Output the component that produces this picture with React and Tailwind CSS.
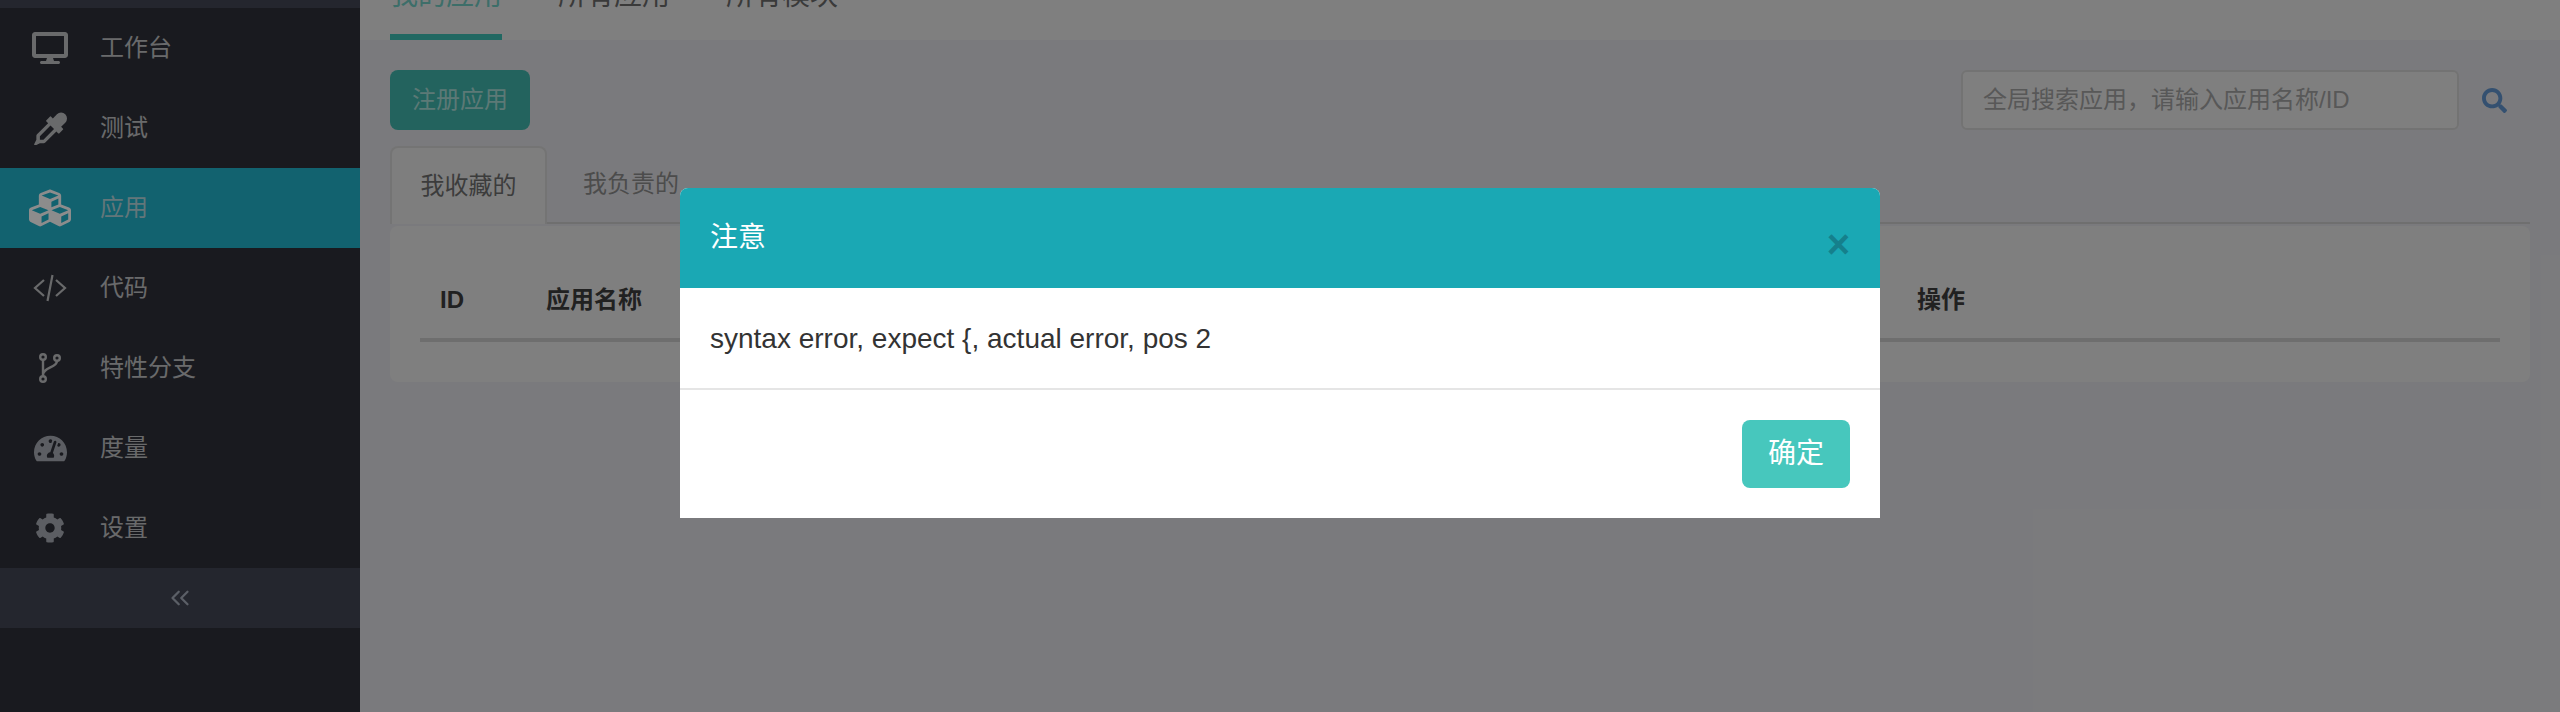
import React from "react";
import { FaDesktop, FaCubes, FaTachometerAlt, FaCog, FaSearch } from "react-icons/fa";
import { ChevronsLeft } from "lucide-react";

const DropperIcon = () => (
  <svg width="33" height="33" viewBox="0 0 1792 1792" fill="currentColor">
    <path d="M1698 126q94 94 94 226.500t-94 225.500l-225 223 104 104q10 10 10 23t-10 23l-210 210q-10 10-23 10t-23-10l-105-105-603 603q-37 37-90 37h-203l-256 128-64-64 128-256v-203q0-53 37-90l603-603-105-105q-10-10-10-23t10-23l210-210q10-10 23-10t23 10l104 104 223-225q93-94 225.500-94t226.500 94zm-1186 1378l576-576-192-192-576 576v192h192z" />
  </svg>
);

const CodeIcon = () => (
  <svg width="34" height="28" viewBox="0 0 34 28" fill="none" stroke="currentColor" strokeWidth="2.2">
    <path d="M11 6 2 14l9 8M23 6l9 8-9 8M19.500 1l-5 26" />
  </svg>
);

const BranchIcon = () => (
  <svg width="22" height="30" viewBox="0 0 22 30" fill="none" stroke="currentColor" strokeWidth="2.4">
    <circle cx="4" cy="4" r="2.800" />
    <circle cx="18" cy="5" r="2.800" />
    <circle cx="4" cy="26" r="2.800" />
    <path d="M4 7v16M18 8c0 7-14 6-14 14" />
  </svg>
);

const menu = [
  { label: "工作台", icon: <FaDesktop size={36} /> },
  { label: "测试", icon: <DropperIcon /> },
  { label: "应用", icon: <FaCubes size={42} className="text-white" />, active: true },
  { label: "代码", icon: <CodeIcon /> },
  { label: "特性分支", icon: <BranchIcon /> },
  { label: "度量", icon: <FaTachometerAlt size={33} className="text-[#a8acb4]" /> },
  { label: "设置", icon: <FaCog size={30} className="text-[#a8acb4]" /> },
];

const Sidebar = () => (
  <aside className="w-[360px] shrink-0 bg-[#2f3139] pt-2 relative">
    <div className="absolute top-0 left-0 w-full h-2 bg-[#434554]" />
    {menu.map((item) => (
      <div
        key={item.label}
        className={
          item.active
            ? "h-20 flex items-center bg-[#21b2ca] text-[#b5d8de]"
            : "h-20 flex items-center text-[#c0c1c4]"
        }
      >
        <span className="w-[100px] flex justify-center shrink-0">{item.icon}</span>
        <span className="text-2xl">{item.label}</span>
      </div>
    ))}
    <div className="h-[60px] bg-[#434554] flex items-center justify-center text-[#a7aebc]">
      <ChevronsLeft size={30} strokeWidth={1.8} />
    </div>
  </aside>
);

const Main = () => (
  <main className="flex-1 min-w-0 bg-[#dfdfe3]">
    <nav className="h-10 overflow-hidden flex items-end gap-14 px-[30px] bg-[#e8e8e8] text-[28px] text-[#6a6a6a]">
      <span className="border-b-[6px] border-[#3cbdb2] pb-[18px] leading-10 text-[#6fc8c0]">我的应用</span>
      <span className="pb-6 leading-10">所有应用</span>
      <span className="pb-6 leading-10">所有模块</span>
    </nav>

    <div className="px-[30px] pt-[30px]">
      <div className="flex justify-between items-center h-[60px]">
        <button className="w-[140px] h-[60px] rounded-lg bg-[#40b5ac] text-2xl text-[#a8dcd7]">注册应用</button>
        <div className="flex items-center">
          <div className="w-[498px] h-[60px] rounded-md border-2 border-[#d2d2d2] bg-[#e8e8e8] flex items-center pl-5 text-2xl text-[#a0a0a0]">
            全局搜索应用，请输入应用名称/ID
          </div>
          <span className="w-[71px] flex justify-center text-[#5f93cc]">
            <FaSearch size={25} />
          </span>
        </div>
      </div>

      <div className="mt-4 h-[78px] flex border-b-2 border-[#cacaca]">
        <div className="w-[157px] h-[78px] bg-[#e6e6e6] rounded-t-lg border-2 border-b-0 border-[#d4d4d4] flex items-center justify-center text-2xl text-[#6e6e6e]">
          我收藏的
        </div>
        <div className="ml-9 h-[76px] flex items-center text-2xl text-[#8a8a8a]">我负责的</div>
      </div>

      <div className="mt-0.5 h-[156px] bg-[#e8e8e8] rounded-lg px-[30px]">
        <div className="h-[116px] border-b-4 border-[#c8c8c8] flex items-center pt-[36px] text-2xl font-bold text-[#3c3c3c] relative">
          <span className="pl-5 w-[126px]">ID</span>
          <span>应用名称</span>
          <span className="absolute left-[1497px]">操作</span>
        </div>
      </div>
    </div>
  </main>
);

const App = () => (
  <div
    className="relative h-screen flex overflow-hidden"
    style={{ fontFamily: '"Liberation Sans", "Noto Sans CJK SC", sans-serif' }}
  >
    <Sidebar />
    <Main />

    <div className="absolute inset-0 bg-black/45 flex justify-center pt-[188px]">
      <div className="w-[1200px] h-[330px] bg-white rounded-t-lg">
        <div className="h-[100px] bg-[#1aa8b4] rounded-t-lg flex items-center justify-between px-[30px] text-[28px] text-white">
          <span>注意</span>
          <span className="text-[40px] font-bold leading-none text-[#15808c] mt-3">×</span>
        </div>
        <div className="h-[102px] border-b-2 border-[#e5e5e5] flex items-center px-[30px] pt-0.5 text-[28px] text-[#333]">
          syntax error, expect {"{"}, actual error, pos 2
        </div>
        <div className="flex justify-end pt-[30px] pr-[30px]">
          <button className="w-[108px] h-[68px] rounded-lg bg-[#47c7bd] text-[28px] text-white">确定</button>
        </div>
      </div>
    </div>
  </div>
);

export default App;
